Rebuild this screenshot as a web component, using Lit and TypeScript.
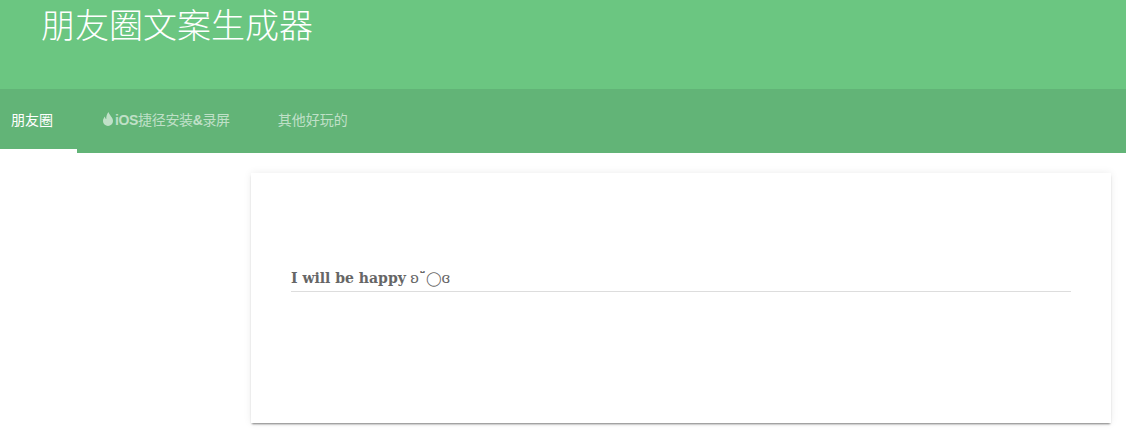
import { LitElement, html, css } from 'lit';
import { customElement } from 'lit/decorators.js';

@customElement('app-root')
export class AppRoot extends LitElement {
  static styles = css`
    :host {
      display: block;
      font-family: 'Liberation Sans', 'Noto Sans CJK SC', sans-serif;
    }

    .header {
      height: 89px;
      box-sizing: border-box;
      padding-left: 41px;
      background: #6bc681;
    }

    .title {
      margin: 0;
      color: #fff;
      font-size: 34px;
      font-weight: 300;
      line-height: 53px;
    }

    .tabs {
      display: flex;
      height: 64px;
      background: #62b477;
    }

    .tab {
      display: flex;
      align-items: center;
      box-sizing: border-box;
      padding: 0 24px 4px;
      color: rgba(255, 255, 255, 0.6);
      font-size: 14px;
    }

    .tab.active {
      padding-left: 11px;
      color: #fff;
      box-shadow: inset 0 -4px 0 #fff;
    }

    .flame {
      width: 12px;
      height: 14px;
      margin: 0 1px;
      fill: currentColor;
    }

    .label {
      letter-spacing: -0.35px;
    }

    .main {
      display: flex;
      justify-content: flex-end;
      padding: 20px 15px 17px 0;
    }

    .card {
      box-sizing: border-box;
      width: 860px;
      height: 250px;
      padding: 96px 40px 0;
      background: #fff;
      box-shadow: 0 2px 2px -1px rgba(0, 0, 0, 0.5), 0 0 8px rgba(0, 0, 0, 0.08);
    }

    .line {
      margin: 0;
      padding-bottom: 4px;
      border-bottom: 1px solid #ddd;
      color: #666;
      font-family: 'DejaVu Serif', serif;
      font-size: 14px;
      line-height: 18px;
    }

    .line b {
      font-weight: 700;
    }
  `;

  render() {
    return html`
      <header class="header">
        <h1 class="title">朋友圈文案生成器</h1>
      </header>
      <nav class="tabs">
        <div class="tab active">朋友圈</div>
        <div class="tab">
          <svg class="flame" viewBox="0 0 12 14">
            <path d="M6.500 0C7 3 11 5 11 9a5 5 0 0 1-10 0c0-2 1-3.500 2-4.500 0 1.500.5 2.300 1.300 2.500C4 4.500 5 2 6.500 0z" />
          </svg>
          <span class="label"><b>iOS</b>捷径安装<b>&amp;</b>录屏</span>
        </div>
        <div class="tab">其他好玩的</div>
      </nav>
      <main class="main">
        <section class="card">
          <p class="line"><b>I will be happy</b> ʚ˘̈◯ɞ</p>
        </section>
      </main>
    `;
  }
}
